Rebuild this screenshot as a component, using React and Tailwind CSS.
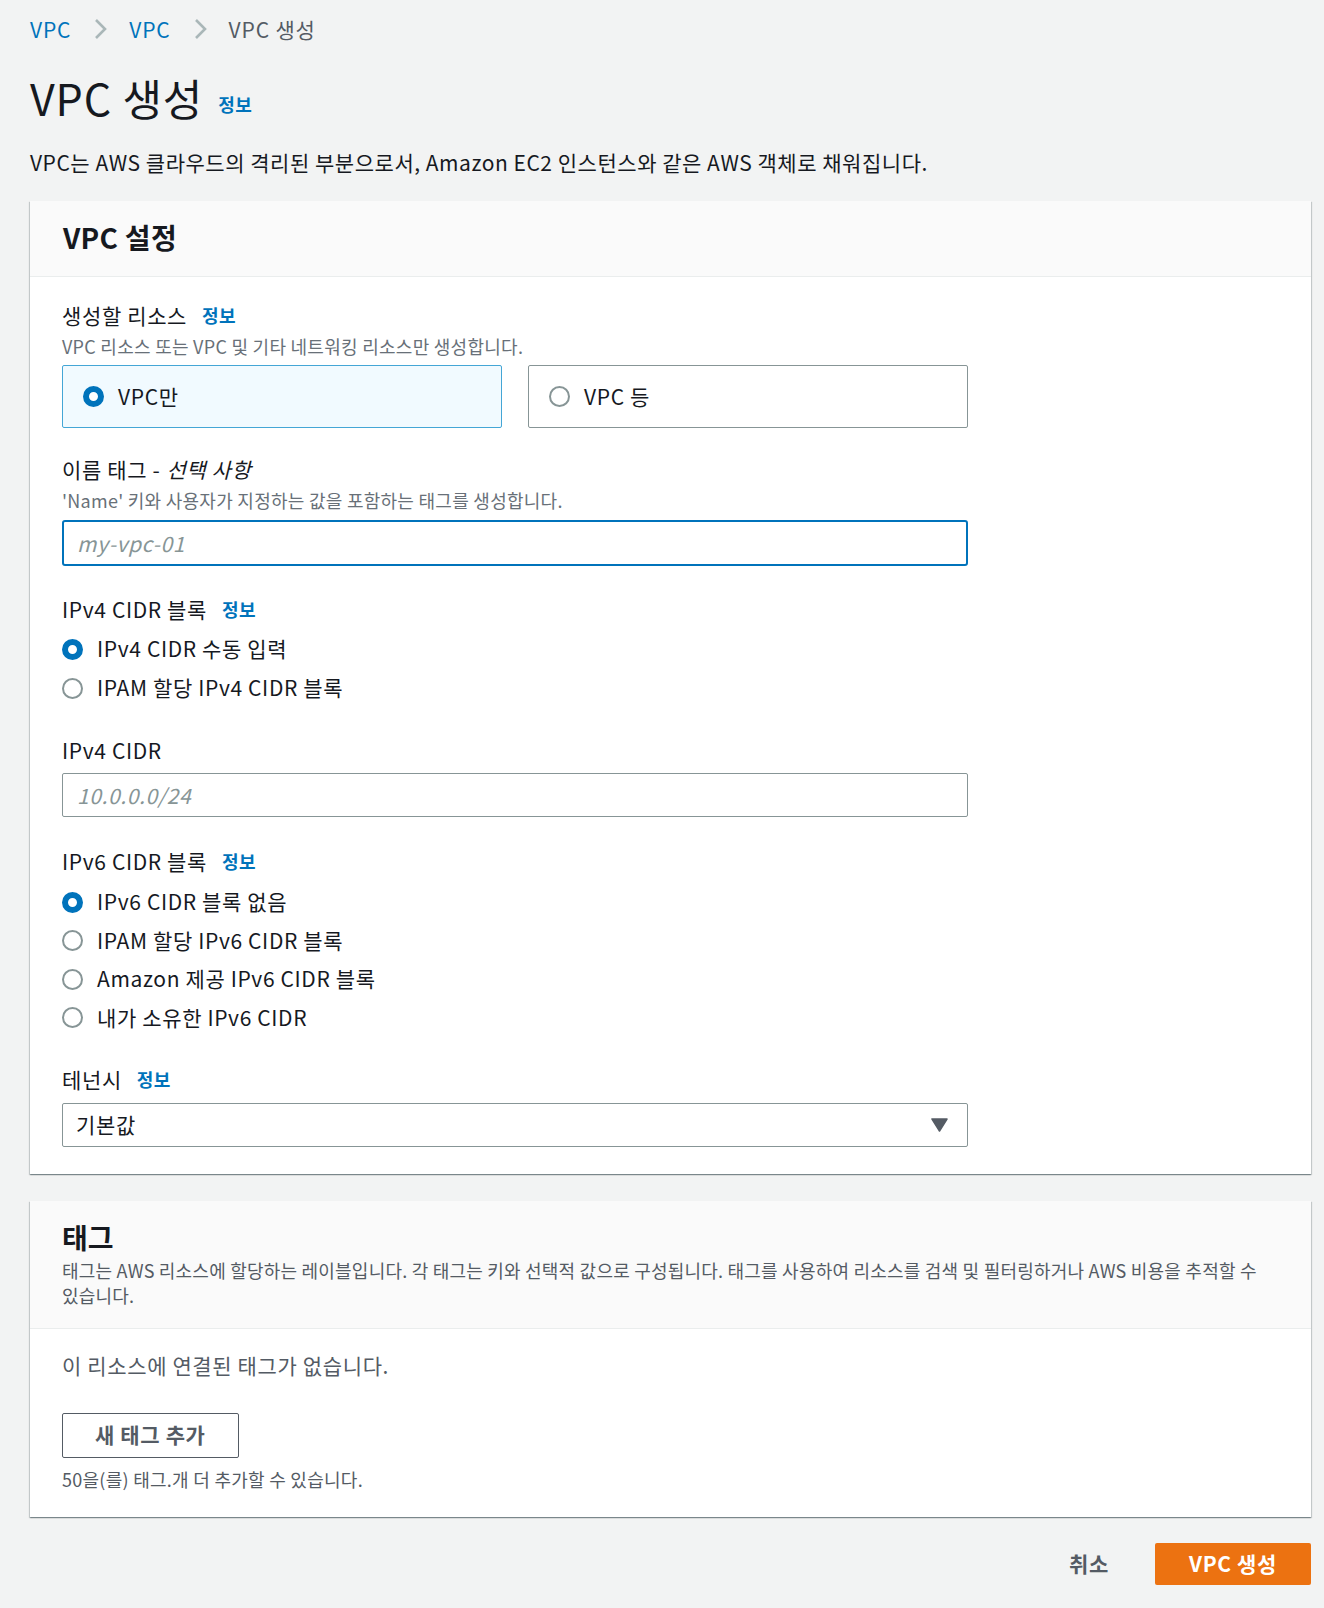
import { useState } from 'react'

const font = "font-['Noto_Sans_CJK_KR','Noto_Sans',sans-serif]"

function Chevron() {
  return (
    <svg width="15" height="22" viewBox="0 0 15 22" className="shrink-0">
      <path d="M3 2 L12 11 L3 20" fill="none" stroke="#aab7b8" strokeWidth="2.6" />
    </svg>
  )
}

function Info() {
  return <span className="text-[18px] font-bold text-[#0073bb] leading-none tracking-[0.02em]">정보</span>
}

function Radio({ checked }) {
  return checked ? (
    <span className="w-[21px] h-[21px] rounded-full border-[6px] border-[#0073bb] bg-white shrink-0 box-border" />
  ) : (
    <span className="w-[21px] h-[21px] rounded-full border-2 border-[#879596] bg-white shrink-0 box-border" />
  )
}

function RadioRow({ checked, label, onClick }) {
  return (
    <div onClick={onClick} className="flex items-center gap-[14px] h-[28px] text-[21px] tracking-[0.03em] text-[#16191f] cursor-pointer">
      <Radio checked={checked} />
      <span>{label}</span>
    </div>
  )
}

function Label({ children, info }) {
  return (
    <div className="flex items-center gap-[15px] h-[28px] text-[21px] tracking-[0.03em] text-[#16191f] leading-[28px]">
      <span>{children}</span>
      {info && <Info />}
    </div>
  )
}

export default function App() {
  const [resource, setResource] = useState('vpc')
  const [v4, setV4] = useState('manual')
  const [v6, setV6] = useState('none')

  const v6Options = [
    ['none', 'IPv6 CIDR 블록 없음'],
    ['ipam', 'IPAM 할당 IPv6 CIDR 블록'],
    ['amazon', 'Amazon 제공 IPv6 CIDR 블록'],
    ['own', '내가 소유한 IPv6 CIDR'],
  ]

  return (
    <div className={`${font} min-h-screen bg-[#f2f3f3] pl-[30px] pr-[13px] pt-[15px] pb-[24px] text-[#16191f] break-keep`}>
      {/* breadcrumb */}
      <nav className="flex items-center h-[28px] text-[21px] leading-[28px] tracking-[0.04em]">
        <span className="text-[#0073bb]">VPC</span>
        <span className="ml-[22px] mr-[21px] flex items-center"><Chevron /></span>
        <span className="text-[#0073bb]">VPC</span>
        <span className="ml-[22px] mr-[21px] flex items-center"><Chevron /></span>
        <span className="text-[#545b64]">VPC 생성</span>
      </nav>

      <div className="mt-[30px] flex items-end gap-[15px] h-[48px]">
        <h1 className="text-[43px] leading-[48px] font-normal tracking-[0.02em]">VPC 생성</h1>
        <span className="mb-[4px]"><Info /></span>
      </div>

      <p className="mt-[27px] text-[21px] leading-[28px] tracking-[0.025em]">
        VPC는 AWS 클라우드의 격리된 부분으로서, Amazon EC2 인스턴스와 같은 AWS 객체로 채워집니다.
      </p>

      {/* VPC 설정 */}
      <section className="mt-[25px] bg-white shadow-[0_1px_1px_0_rgba(0,28,36,0.3),1px_1px_1px_0_rgba(0,28,36,0.15),-1px_1px_1px_0_rgba(0,28,36,0.15)]">
        <div className="bg-[#fafafa] border-b border-[#eaeded] px-[33px] pt-[19px] pb-[22px]">
          <h2 className="text-[28px] leading-[34px] font-bold tracking-[0.01em]">VPC 설정</h2>
        </div>
        <div className="px-[32px] pt-[24px] pb-[27px]">
          <div className="w-[906px]">
            <Label info>생성할 리소스</Label>
            <p className="mt-[5px] text-[18px] leading-[24px] tracking-[0.015em] text-[#687078]">VPC 리소스 또는 VPC 및 기타 네트워킹 리소스만 생성합니다.</p>
            <div className="mt-[7px] grid grid-cols-2 gap-[26px]">
              {[
                ['vpc', 'VPC만'],
                ['more', 'VPC 등'],
              ].map(([k, l]) => (
                <div
                  key={k}
                  onClick={() => setResource(k)}
                  className={
                    resource === k
                      ? 'h-[63px] rounded-[2px] border border-[#44a6d6] bg-[#f1faff] flex items-center gap-[14px] px-[20px] text-[21px] tracking-[0.03em] cursor-pointer'
                      : 'h-[63px] rounded-[2px] border border-[#879596] bg-white flex items-center gap-[14px] px-[20px] text-[21px] tracking-[0.03em] cursor-pointer'
                  }
                >
                  <Radio checked={resource === k} />
                  <span>{l}</span>
                </div>
              ))}
            </div>

            <div className="mt-[28px] flex items-center h-[28px] text-[21px] tracking-[0.03em]">
              <span>이름 태그 - </span>
              <span className="italic ml-[6px]">선택 사항</span>
            </div>
            <p className="mt-[4px] text-[18px] leading-[24px] tracking-[0.015em] text-[#687078]">'Name' 키와 사용자가 지정하는 값을 포함하는 태그를 생성합니다.</p>
            <input
              placeholder="my-vpc-01"
              className="mt-[8px] w-full h-[46px] rounded-[3px] border-2 border-[#0073bb] px-[13px] text-[21px] tracking-[0.03em] outline-none placeholder:italic placeholder:text-[#879596]"
            />

            <div className="mt-[29px]"><Label info>IPv4 CIDR 블록</Label></div>
            <div className="mt-[12px] flex flex-col gap-[11px]">
              <RadioRow checked={v4 === 'manual'} label="IPv4 CIDR 수동 입력" onClick={() => setV4('manual')} />
              <RadioRow checked={v4 === 'ipam'} label="IPAM 할당 IPv4 CIDR 블록" onClick={() => setV4('ipam')} />
            </div>

            <div className="mt-[34px]"><Label>IPv4 CIDR</Label></div>
            <input
              placeholder="10.0.0.0/24"
              className="mt-[9px] w-full h-[44px] rounded-[2px] border border-[#879596] px-[14px] text-[21px] tracking-[0.03em] outline-none placeholder:italic placeholder:text-[#879596]"
            />

            <div className="mt-[30px]"><Label info>IPv6 CIDR 블록</Label></div>
            <div className="mt-[13px] flex flex-col gap-[10.5px]">
              {v6Options.map(([k, l]) => (
                <RadioRow key={k} checked={v6 === k} label={l} onClick={() => setV6(k)} />
              ))}
            </div>

            <div className="mt-[33px]"><Label info>테넌시</Label></div>
            <div className="mt-[10px] h-[44px] rounded-[2px] border border-[#879596] flex items-center justify-between pl-[13px] pr-[19px] text-[21px] tracking-[0.03em]">
              <span>기본값</span>
              <svg width="17" height="14" viewBox="0 0 17 14">
                <path d="M1 1 H16 L8.5 13 Z" fill="#545b64" stroke="#545b64" strokeWidth="1.5" strokeLinejoin="round" />
              </svg>
            </div>
          </div>
        </div>
      </section>

      {/* 태그 */}
      <section className="mt-[27px] bg-white shadow-[0_1px_1px_0_rgba(0,28,36,0.3),1px_1px_1px_0_rgba(0,28,36,0.15),-1px_1px_1px_0_rgba(0,28,36,0.15)]">
        <div className="bg-[#fafafa] border-b border-[#eaeded] px-[32px] pt-[19px] pb-[20px]">
          <h2 className="text-[28px] leading-[34px] font-bold">태그</h2>
          <p className="mt-[4px] text-[18px] leading-[25px] tracking-[0.012em] text-[#545b64] break-keep">
            태그는 AWS 리소스에 할당하는 레이블입니다. 각 태그는 키와 선택적 값으로 구성됩니다. 태그를 사용하여 리소스를 검색 및 필터링하거나 AWS 비용을 추적할 수 있습니다.
          </p>
        </div>
        <div className="px-[32px] pt-[22px] pb-[26px]">
          <p className="text-[21px] leading-[28px] tracking-[0.03em] text-[#545b64]">이 리소스에 연결된 태그가 없습니다.</p>
          <button className="mt-[34px] h-[45px] px-[32px] rounded-[2px] border border-[#545b64] bg-white text-[21px] tracking-[0.03em] font-bold text-[#545b64]">
            새 태그 추가
          </button>
          <p className="mt-[9px] text-[18px] leading-[24px] tracking-[0.015em] text-[#545b64]">50을(를) 태그.개 더 추가할 수 있습니다.</p>
        </div>
      </section>

      <div className="mt-[26px] flex justify-end items-center gap-[46px]">
        <button className="text-[21px] font-bold tracking-[0.03em] text-[#545b64]">취소</button>
        <button className="h-[42px] w-[156px] rounded-[2px] bg-[#ec7211] text-white text-[21px] tracking-[0.03em] font-bold">VPC 생성</button>
      </div>
    </div>
  )
}
